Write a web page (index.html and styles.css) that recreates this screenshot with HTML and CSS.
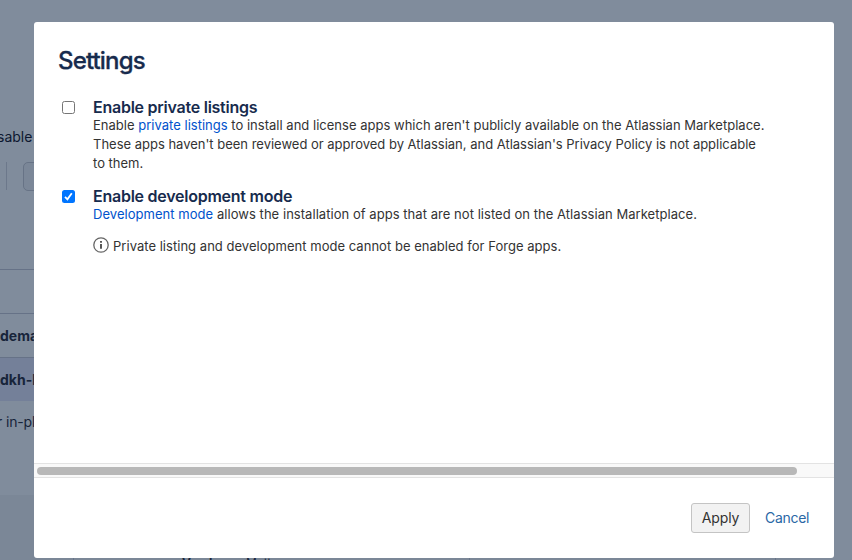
FILE: index.html
```
<!DOCTYPE html>
<html lang="en">
<head>
<meta charset="utf-8">
<title>Settings</title>
<link rel="stylesheet" href="styles.css">
</head>
<body>
<div class="page">
  <div class="intro"><span class="intro-text">sable</span></div>
  <div class="filters"><span class="divider"></span><span class="filter"></span></div>
  <div class="row head"></div>
  <div class="row"><b class="app">dema</b></div>
  <div class="row selected"><b class="app">dkh-l</b></div>
  <div class="note"><span>r in-pl</span></div>
  <div class="details"><div class="panel"><span class="vendor"><b>Vendor:</b> <span class="vendor-name">Matter</span></span><i class="tick"></i></div></div>
</div>
<div class="modal">
  <div class="content">
    <h1>Settings</h1>
    <div class="option">
      <span class="check"></span>
      <div class="text">
        <h2 class="private">Enable private listings</h2>
        <p><span class="l1">Enable <a>private listings</a> to install and license apps which aren't publicly available on the Atlassian Marketplace.</span><br><span class="l2">These apps haven't been reviewed or approved by Atlassian, and Atlassian's Privacy Policy is not applicable</span><br><span class="l3">to them.</span></p>
      </div>
    </div>
    <div class="option second">
      <span class="check checked"><svg width="13" height="13" viewBox="0 0 13 13"><path d="M3 6.8 5.4 9.3 9.8 3.2" fill="none" stroke="#fff" stroke-width="1.8"/></svg></span>
      <div class="text">
        <h2 class="dev">Enable development mode</h2>
        <p><span class="l4"><a>Development mode</a> allows the installation of apps that are not listed on the Atlassian Marketplace.</span></p>
        <div class="info"><svg width="16" height="16" viewBox="0 0 16 16"><circle cx="8" cy="8" r="7.2" fill="none" stroke="#666" stroke-width="1.3"/><path d="M7.1 4h1.8v1.7H7.1zM7.1 7h1.8v4.8H7.1z" fill="#444"/></svg><span class="l5">Private listing and development mode cannot be enabled for Forge apps.</span></div>
      </div>
    </div>
  </div>
  <div class="scroll"><div class="thumb"></div></div>
  <div class="footer"><span class="apply"><span>Apply</span></span><span class="cancel">Cancel</span></div>
</div>
</body>
</html>
```
FILE: styles.css
```
* { box-sizing: border-box; }
body { margin: 0; width: 852px; height: 560px; overflow: hidden; font-family: Inter, "Liberation Sans", sans-serif; background: #808c9c; }
.page { width: 800px; height: 560px; overflow: hidden; color: #17243a; font-size: 14px; white-space: nowrap; }
.intro { height: 162px; padding-top: 127px; line-height: 20px; color: #0d1830; }
.intro-text { margin-left: -3px; }
.filters { height: 107px; display: flex; }
.divider { width: 1px; height: 28px; margin-left: 6px; background: #6c788b; }
.filter { width: 80px; height: 29px; margin-left: 16px; border: 1px solid #677386; border-radius: 5px; background: #7b8798; }
.row { height: 44px; border-top: 1px solid #667287; line-height: 44px; }
.app { font-weight: 700; }
.selected { background: #748099; }
.note { height: 94px; padding-top: 11px; line-height: 20px; }
.note span { margin-left: -3px; letter-spacing: -.15px; }
.details { height: 65px; background: #7b8797; }
.panel { display: flex; height: 65px; margin-left: 73px; width: 703px; border: solid #68758a; border-width: 0 1px; padding: 60px 0 0 108px; line-height: 15px; font-size: 12px; }
.vendor { width: 287px; }
.vendor-name { margin-left: 14px; }
.tick { width: 1px; height: 5px; background: #68758a; }
.modal { position: absolute; left: 34px; top: 22px; width: 800px; height: 536px; display: flex; flex-direction: column; background: #fff; border-radius: 3px; overflow: hidden; color: #333; }
.content { height: 441px; padding: 24px; white-space: nowrap; }
h1 { margin: 0; height: 52px; font-size: 24px; line-height: 30px; font-weight: 500; color: #172b4d; letter-spacing: -.85px; -webkit-text-stroke: .3px #172b4d; }
.option { display: flex; height: 89px; }
.check { width: 13px; height: 13px; margin: 3px 18px 0 4px; border: 1px solid #767676; border-radius: 2.5px; }
.checked { border: 0; background: #0075ff; }
.checked svg { display: block; }
h2 { margin: 0; font-size: 16px; line-height: 18px; font-weight: 600; color: #172b4d; letter-spacing: -.25px; }
p { margin: 0; font-size: 13px; line-height: 19px; }
.l1 { letter-spacing: .014px; }
.l2 { letter-spacing: -.008px; }
.l4 { letter-spacing: .045px; }
.l5 { letter-spacing: .03px; }
a { color: #0052cc; }
.info { display: flex; gap: 4px; margin-top: 13px; font-size: 13px; line-height: 18px; }
.scroll { height: 15px; border: solid #e3e3e3; border-width: 1px 0; background: #f9f9f9; padding: 3px; }
.thumb { width: 760px; height: 8px; border-radius: 4px; background: #b8b8b8; }
.footer { display: flex; padding: 25px 0 0 657px; gap: 15px; font-size: 14px; line-height: 30px; white-space: nowrap; }
.apply { flex: none; width: 59px; height: 30px; border: 1px solid #c4c4c4; border-radius: 3px; background: #f2f2f2; line-height: 28px; text-align: center; letter-spacing: -.1px; }
.cancel { color: #2a67a5; letter-spacing: -.3px; }
```
